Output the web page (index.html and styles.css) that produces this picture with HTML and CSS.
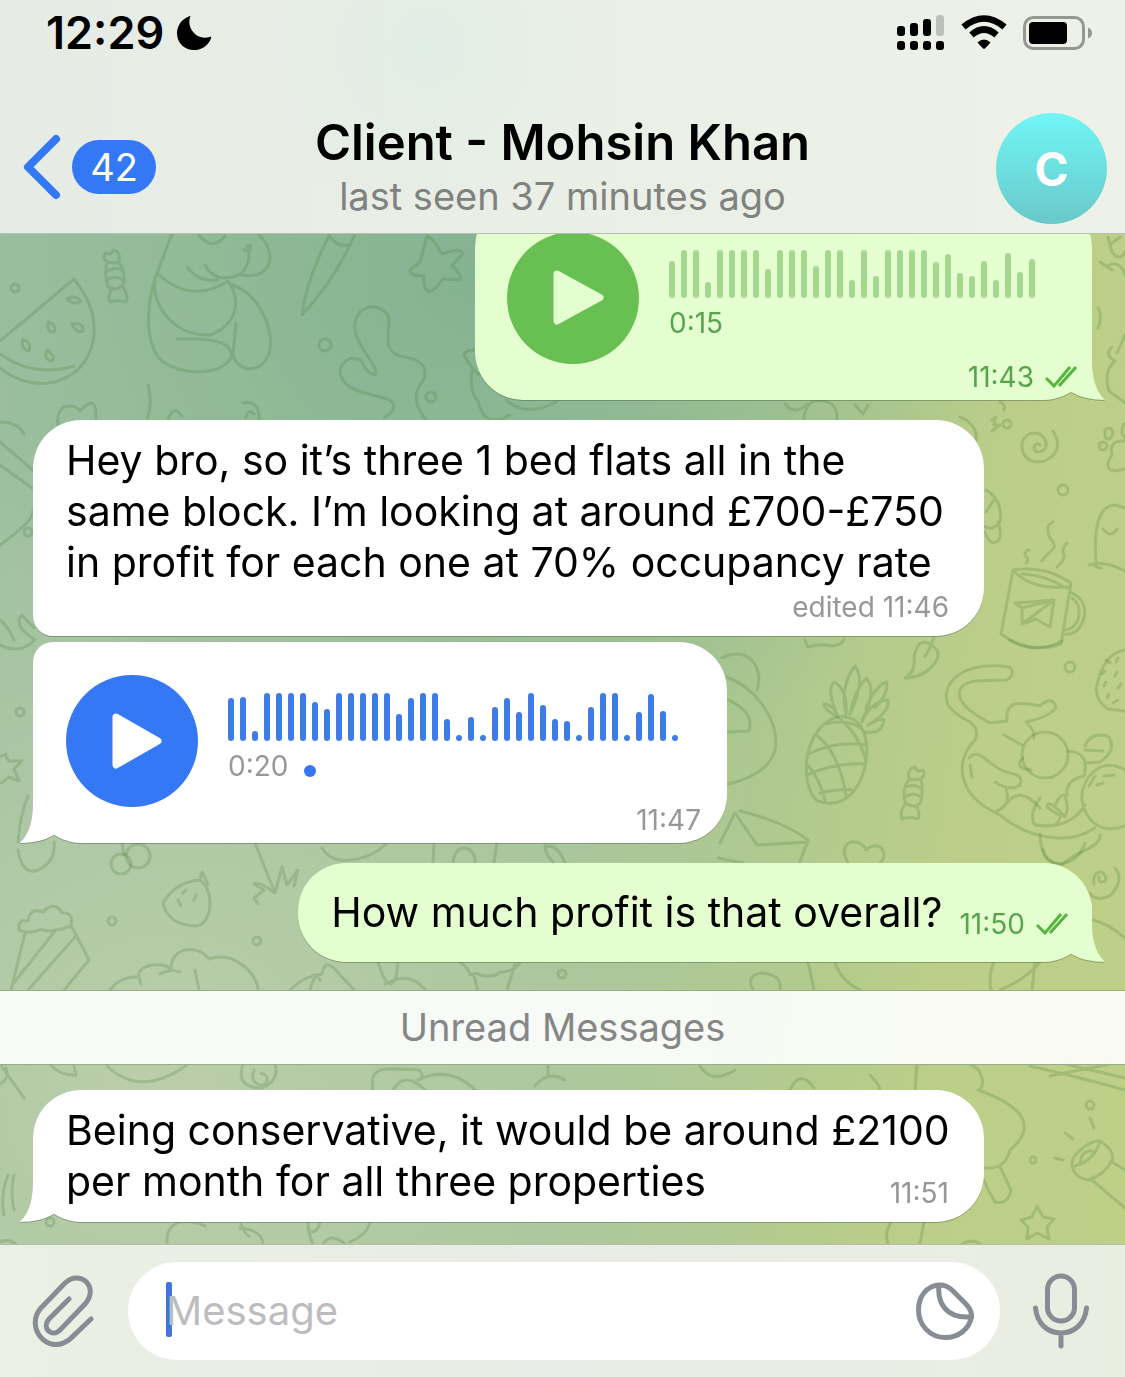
FILE: index.html
```html
<!DOCTYPE html>
<html lang="en">
<head>
<meta charset="utf-8">
<meta name="viewport" content="width=device-width, initial-scale=1">
<title>Client - Mohsin Khan</title>
<link rel="stylesheet" href="styles.css">
</head>
<body>
<header class="header">
  <div class="status">
    <div class="status-group">
      <span class="clock">12:29</span>
      <svg class="moon" viewBox="0 0 36 36" width="36" height="36" aria-hidden="true"><path d="M13.2 1.2C14.300 .8 14.600 1.200 14.100 2.300C10.500 12 20 26 33.500 22C35 21.600 35.600 22.100 35 23.400C32.200 30.500 25.800 35 18 35C8.300 35 1 27.800 1 18.200C1 10.400 6 3.800 13.200 1.200Z"/></svg>
    </div>
    <div class="status-group status-right">
      <svg viewBox="0 0 48 36" width="48" height="36" aria-hidden="true">
        <rect x="0" y="11" width="8" height="10" rx="3"/><rect x="13" y="8" width="8" height="13" rx="3"/><rect x="26" y="4" width="8" height="17" rx="3"/><rect x="39" y="0" width="8" height="21" rx="3" fill="#bcc0ba"/>
        <rect x="0" y="26" width="8" height="9" rx="3"/><rect x="13" y="26" width="8" height="9" rx="3"/><rect x="26" y="26" width="8" height="9" rx="3"/><rect x="39" y="26" width="8" height="9" rx="3"/>
      </svg>
      <svg viewBox="0 0 46 36" width="46" height="36" aria-hidden="true">
        <path d="M23 34Q24 34 29.500 27.600Q23 21.500 16.500 27.600Q22 34 23 34Z"/>
        <path d="M10.500 20Q23 9 35.500 20" fill="none" stroke="#000" stroke-width="6.500"/>
        <path d="M2.500 12Q23 -5 43.500 12" fill="none" stroke="#000" stroke-width="6.500"/>
      </svg>
      <svg viewBox="0 0 70 36" width="70" height="36" aria-hidden="true">
        <rect x="1.500" y="2.500" width="59" height="31" rx="9" fill="none" stroke="#949891" stroke-width="3"/>
        <rect x="6" y="7" width="38" height="22" rx="4"/>
        <path d="M65 12.500Q69 14 69 18T65 23.500Z" fill="#949891"/>
      </svg>
    </div>
  </div>
  <div class="nav">
    <button class="back" type="button" aria-label="Back, 42 unread chats">
      <svg viewBox="0 0 38 66" width="38" height="66" aria-hidden="true"><path d="M33 5L5 33L33 61" fill="none" stroke="#3478f6" stroke-width="8" stroke-linecap="round" stroke-linejoin="round"/></svg>
      <span class="count">42</span>
    </button>
    <div class="peer">
      <h1 class="peer-name">Client - Mohsin Khan</h1>
      <p class="peer-seen">last seen 37 minutes ago</p>
    </div>
    <button class="avatar" type="button" aria-label="Contact profile">C</button>
  </div>
</header>

<main class="chat">
  <svg class="doodles" viewBox="0 234 1125 1010" preserveAspectRatio="xMinYMin slice" aria-hidden="true">
    <!-- melon slice -->
    <path d="M0 341L74 279Q96 306 94 335C91 362 75 376 55 382Q25 388 0 368M0 354Q34 378 74 366"/>
    <path d="M67 299Q74 294 81 301Q75 306 67 299ZM48 322Q57 325 54 332Q46 332 48 322ZM72 324Q84 322 83 331Q76 334 72 324ZM23 339Q32 343 29 351Q20 349 23 339ZM47 350Q56 356 52 361Q43 360 47 350Z"/>
    <!-- candies -->
    <g id="candy"><path d="M107 262Q101 256 106 253Q111 256 113 250Q121 252 119 260Q121 264 107 262ZM107 262Q104 275 108 287Q116 292 123 285Q127 275 119 262M106 272Q114 266 122 270M107 280Q115 274 124 281M111 290Q107 300 111 302Q117 299 126 302Q129 296 123 287"/></g>
    <use href="#candy" transform="translate(1028 517) scale(-1 1)"/>
    <!-- sitting dog -->
    <path d="M172 234L157 273C145 305 146 340 158 357C175 376 220 377 231 358C235 340 205 338 177 339M157 273Q190 305 228 281C242 300 237 325 210 335C175 337 150 305 155 278M233 285C260 295 275 330 269 354C260 375 238 372 233 355L236 323M258 234C280 255 270 280 242 275M205 265Q215 285 241 274Q252 262 248 248M187 267Q198 282 218 280M199 235Q212 252 225 236M247 246q5-2 3 4q-6 2-6-1"/>
    <!-- carrot and star -->
    <path d="M330 234Q306 280 302 315Q335 280 355 234M329 236Q338 248 350 245"/>
    <path d="M427 236Q433 238 442 254Q461 247 463 254L452 265Q463 277 460 280L443 279Q433 293 428 291Q423 288 424 276Q409 276 410 270L420 262Z"/>
    <!-- squiggle -->
    <path d="M384 418Q400 407 390 400C370 393 340 392 340 370Q345 354 361 360C368 375 378 380 375 368C365 350 345 330 360 312Q375 300 388 315C392 330 380 350 400 356C430 360 428 375 420 385Q410 400 426 420"/>
    <path d="M58 424C55 400 78 405 80 411Q97 392 96 418M148 385q5 18-1 35M168 420q5-16 14-4M243 403Q260 400 259 420M246 418q2-10 8-4M0 422Q18 422 24 434"/>
    <path d="M481 351Q466 348 464 355Q472 370 480 375M472 371Q469 392 478 401Q484 430 510 415M506 400q20 18 50 2M804 420Q805 400 819 401Q838 400 837 420M785 404q10 12 22 0M855 405l8 9l5-9"/>
    <!-- left margin, middle -->
    <path d="M0 442L35 472M0 465L32 488M0 545Q35 520 33 510M0 645Q20 655 35 640Q12 625 22 615L34 628M0 620Q8 626 14 640M5 755l4 6l13 0l-8 8l5 12l-10-4l-8 6M0 757l6-3M28 796Q20 815 18 842M18 850Q22 876 38 870Q56 862 54 842"/>
    <!-- spiral, sprinkles, paw, ghost -->
    <path d="M1053 431C1065 450 1050 462 1037 462Q1021 460 1022 443Q1027 430 1040 434Q1050 442 1044 450Q1034 455 1034 447Q1036 442 1040 445"/>
    <path d="M992 420l4-3l-2 8l6 0l-8 6M1000 402q6 2 4 8M960 417Q978 425 976 440M986 490Q1003 500 1000 522Q992 532 984 526M986 512l8-12M998 522Q1004 540 994 543Q988 542 985 532"/>
    <path d="M1125 441Q1108 440 1112 455Q1102 470 1116 471L1125 469M1105 430Q1111 425 1113 433Q1110 443 1105 437ZM1124 424q-5 10 2 14M1101 568Q1091 566 1096 562Q1092 506 1115 505L1125 508M1089 565Q1105 560 1125 571M1103 529q8 10 14 0"/>
    <path d="M1108 237l4 15q8 10 13 0M1120 237l-10 8M1109 265q12-4 16 10M1100 262l12 8M1098 308q5 8 0 20M1112 347q-8 8 3 14q-12 10-6 30l16 12M1125 335l-8 18"/>
    <!-- steaming mug -->
    <path d="M1013 570Q1045 565 1071 583L1061 644Q1030 655 1001 634ZM1013 570Q1030 590 1069 587M1022 574Q1045 575 1062 586M1070 592Q1088 600 1084 618Q1079 636 1063 634M1072 598Q1082 605 1078 620Q1073 630 1065 630M1026 563q4-4 0-6q-3-6 3-7M1042 561C1048 550 1061 550 1050 538Q1044 526 1053 522M1057 567Q1067 558 1063 552Q1063 546 1067 543"/>
    <path d="M1015 603L1054 600L1050 627L1036 619L1022 624L1022 608ZM1022 608L1054 600L1022 624"/>
    <!-- leaf, sponge -->
    <path d="M905 678Q916 672 914 657Q918 637 930 644Q943 652 935 663Q925 677 905 678M934 638Q929 651 925 656M805 640l3 7q14-4 22-1q12 0 14-7M1009 640Q1035 655 1062 641M1125 650Q1104 653 1097 685Q1094 700 1108 709L1125 711"/>
    <path d="M1106 660l4 3M1118 658l-2 4M1105 671l-3 3M1117 672l-2 4M1106 682l-2 4M1121 684l-3 4M1109 694l-2 4M1118 700l-5 3" />
    <!-- bear -->
    <path d="M722 658C745 645 765 665 757 690M727 677C760 690 780 725 775 750Q768 775 728 784M728 700Q755 712 749 731L728 732"/>
    <!-- pineapple -->
    <path d="M838 717C870 712 875 760 855 790Q838 810 816 800C798 780 805 725 838 717ZM816 735Q838 750 846 795M838 717Q860 735 866 762M807 755Q835 740 866 745M807 775Q835 762 866 764M808 765Q820 780 825 800M824 724Q850 718 863 730M820 793Q838 788 855 790"/>
    <path d="M838 717Q826 690 834 682Q848 690 846 714M846 714Q840 685 855 666Q866 680 850 714M850 714Q855 690 866 678Q878 690 862 720M866 708Q876 685 887 682Q888 695 875 708M862 722Q872 700 888 700Q890 712 868 725M868 725Q880 718 884 720Q882 735 866 732M838 717Q824 710 824 704Q830 704 836 712"/>
    <!-- cat and pup -->
    <path d="M990 723Q955 705 960 690C965 678 985 681 1006 680Q1016 676 1010 667C960 660 940 685 948 705Q955 715 970 722Q980 730 975 740C955 760 955 795 1000 815C1030 840 1070 845 1095 828M990 723L1007 721C1005 700 1018 702 1040 706Q1052 695 1056 707Q1052 716 1026 722Q1035 730 1034 738M1004 735L1022 745M970 765l2 12M969 758C980 745 990 770 1010 773Q1024 775 1020 785Q1010 792 995 782M1006 790Q1012 805 995 812M1006 804Q1020 785 1040 808"/>
    <circle cx="1045" cy="755" r="23"/>
    <path d="M1068 751Q1090 752 1084 776Q1065 780 1067 795M1085 746Q1090 732 1108 736Q1118 750 1100 762L1085 763M1085 750l18 1M1023 758q-10 10 8 12M1125 770C1100 755 1080 780 1082 800C1085 820 1100 835 1125 826M1095 776l-6 10M1097 785l6-2M1104 776l10-1M1040 798Q1028 815 1035 825Q1070 830 1085 805M1040 825Q1060 830 1060 815M1055 805q10-20 12 0t-20 2q0-10 18 10M1040 834Q1040 862 1062 865C1075 850 1100 850 1100 835"/>
    <!-- envelope, heart -->
    <path d="M720 843L735 813L757 845L808 842M740 811Q785 822 808 840L800 862M718 858l25 5M848 863C835 840 860 836 866 850C880 838 890 855 880 863"/>
    <!-- lower left band -->
    <circle cx="121" cy="864" r="10"/><circle cx="138" cy="856" r="12"/>
    <path d="M124 855l-2-12M255 843L275 893M275 893Q258 880 254 884L264 890L254 898L258 904M275 893L282 867L287 885L298 870L294 886M322 848Q330 862 350 860Q372 858 387 843M434 843l-1 20M497 843l-3 20M453 862Q455 848 465 848Q475 850 475 862M545 845q0 10 8 17M545 847q12-4 20 16"/>
    <path d="M163 903Q175 882 200 880C215 890 213 925 195 926Q168 925 163 903ZM200 880l2-8l6 12M178 900l3 6M194 900l2-5M183 893l3-3"/>
    <path d="M19 930Q18 918 28 921Q30 907 43 912Q55 900 62 913Q74 912 71 926Q48 934 42 929Q28 935 19 930ZM25 933L11 990M55 931L13 984M76 936L28 990M72 927L89 960L64 990"/>
    <path d="M110 990Q120 976 139 977C135 965 165 960 171 970C170 945 200 945 209 959C235 950 258 975 258 990M139 977l2 7M160 974q10-6 20-2M195 970l4 20M290 990Q305 975 322 974Q325 955 340 975L354 990M310 990q5-20 10-10M378 962Q388 995 396 978L398 962M385 984Q410 970 425 990"/>
    <path d="M460 962Q470 970 470 975Q478 972 480 975Q495 978 500 972Q515 972 520 962M474 976l4 15M515 964l-8 26M753 990Q745 975 762 973Q783 975 780 990M808 962l6 28M835 962Q840 980 860 990M994 962q-6 14-3 28M1000 990q25-10 40-28M1035 962l-3 28M1093 920q16 4 32 18M1043 850q3 16 22 13q15-4 20-20M1115 868Q1125 880 1110 896Q1095 902 1090 893M1094 884q-2-12 8-12q8 8 0 10q-4 0-3-5"/>
    <!-- under the divider -->
    <path d="M0 1064L24 1098M0 1084q10-6 6-16M50 1064Q60 1076 76 1075L74 1066M107 1066Q140 1098 187 1065M243 1064Q235 1088 262 1088Q280 1080 275 1064M254 1070q-5 15 10 15q8-8-3-12M373 1090C368 1065 385 1068 420 1070Q425 1078 418 1080M393 1090Q405 1070 425 1090M418 1080Q450 1065 475 1090M548 1064v10M535 1086Q548 1070 565 1080M700 1066Q712 1085 735 1070M790 1090q10-22 24-2M870 1075Q880 1085 880 1090M917 1064l-2 26M970 1064C985 1070 985 1090 978 1090C1020 1105 1040 1125 1010 1150Q1005 1170 984 1168M1000 1167L1011 1190Q1008 1205 995 1202Q985 1185 984 1180M1030 1066Q1070 1075 1125 1090M1050 1076l60-12M1065 1064l60 14M1090 1118l4 10M1065 1133l8 6M1055 1158l8 2"/>
    <path d="M1072 1166C1070 1155 1090 1140 1100 1141Q1115 1150 1112 1160Q1105 1175 1088 1180Q1075 1178 1072 1166ZM1075 1166Q1095 1160 1100 1141M1080 1162q2-12 12-11M1092 1180L1125 1208M1112 1162L1125 1170"/>
    <path d="M1037 1206L1043 1217L1054 1219L1047 1227L1049 1239L1037 1233L1027 1239L1028 1227L1021 1220L1032 1217ZM888 1244q-4-10 3-22M920 1244l4-22M962 1244q10-6 18 0M167 1244C165 1215 195 1220 205 1226M241 1224q5 12 8 12M240 1228Q262 1230 263 1244M308 1222q0 12 5 22M320 1222q-2 10-8 10M323 1244Q330 1232 345 1244M370 1222q-2 12-20 20M0 1242q8-4 16 2M4 1215q-4-20 4-40M14 1210q-4-20 0-35"/>
    <!-- bubbles of soda -->
    <circle cx="15" cy="288" r="4"/><circle cx="325" cy="345" r="6"/><circle cx="431" cy="397" r="5"/><circle cx="1007" cy="424" r="4"/><circle cx="1063" cy="490" r="5"/><circle cx="1103" cy="446" r="4"/><circle cx="1070" cy="667" r="5"/><circle cx="20" cy="712" r="4"/><circle cx="112" cy="921" r="4"/><circle cx="257" cy="941" r="4"/><circle cx="562" cy="974" r="4"/><circle cx="1090" cy="1105" r="4"/><circle cx="1033" cy="1160" r="3"/><circle cx="50" cy="1222" r="4"/><circle cx="28" cy="532" r="4"/>
  </svg>

  <article class="bubble out voice-out tail-out">
    <div class="voice">
      <button class="play" type="button" aria-label="Play voice message">
        <svg viewBox="0 0 132 132" width="132" height="132" aria-hidden="true"><path d="M50 42L93 65.500L50 89Z"/></svg>
      </button>
      <div class="track">
        <div class="wave"><i style="height:37px"></i><i style="height:48px"></i><i style="height:48px"></i><i style="height:16px"></i><i style="height:48px"></i><i style="height:48px"></i><i style="height:48px"></i><i style="height:48px"></i><i style="height:29px"></i><i style="height:48px"></i><i style="height:48px"></i><i style="height:48px"></i><i style="height:32px"></i><i style="height:48px"></i><i style="height:48px"></i><i style="height:18px"></i><i style="height:48px"></i><i style="height:22px"></i><i style="height:48px"></i><i style="height:48px"></i><i style="height:48px"></i><i style="height:48px"></i><i style="height:36px"></i><i style="height:44px"></i><i style="height:25px"></i><i style="height:22px"></i><i style="height:37px"></i><i style="height:18px"></i><i style="height:45px"></i><i style="height:26px"></i><i style="height:39px"></i></div>
        <div class="duration">0:15</div>
      </div>
    </div>
    <div class="meta">11:43 <svg class="ticks" viewBox="0 0 32 22" width="32" height="22" aria-label="Read"><path d="M1 12L9 20L25 1M14 20L31 1"/></svg></div>
    <svg class="tail" viewBox="0 0 34 60" width="34" height="60" aria-hidden="true"><path d="M0 52L21 0V16C21 38 24 50 34 60Q14 60 0 52Z"/></svg>
  </article>

  <article class="bubble in">
    <p class="text">Hey bro, so it’s three 1 bed flats all in the same block. I’m looking at around £700-£750 in profit for each one at 70% occupancy rate</p>
    <div class="meta meta-row">edited 11:46</div>
  </article>

  <article class="bubble in grouped voice-in tail-in">
    <div class="voice">
      <button class="play" type="button" aria-label="Play voice message">
        <svg viewBox="0 0 132 132" width="132" height="132" aria-hidden="true"><path d="M50 42L92 66L50 90Z"/></svg>
      </button>
      <div class="track">
        <div class="wave"><i style="height:43px"></i><i style="height:44px"></i><i style="height:10px"></i><i style="height:48px"></i><i style="height:48px"></i><i style="height:48px"></i><i style="height:48px"></i><i style="height:39px"></i><i style="height:32px"></i><i style="height:48px"></i><i style="height:48px"></i><i style="height:48px"></i><i style="height:48px"></i><i style="height:48px"></i><i style="height:27px"></i><i style="height:43px"></i><i style="height:48px"></i><i style="height:48px"></i><i style="height:22px"></i><i style="height:6px"></i><i style="height:24px"></i><i style="height:6px"></i><i style="height:34px"></i><i style="height:43px"></i><i style="height:29px"></i><i style="height:48px"></i><i style="height:36px"></i><i style="height:22px"></i><i style="height:20px"></i><i style="height:6px"></i><i style="height:34px"></i><i style="height:48px"></i><i style="height:48px"></i><i style="height:6px"></i><i style="height:29px"></i><i style="height:47px"></i><i style="height:30px"></i><i style="height:6px"></i></div>
        <div class="duration">0:20<span class="unplayed"></span></div>
      </div>
    </div>
    <div class="meta">11:47</div>
    <svg class="tail" viewBox="0 0 34 60" width="34" height="60" aria-hidden="true"><path d="M34 52L13 0V16C13 38 10 50 0 60Q20 60 34 52Z"/></svg>
  </article>

  <article class="bubble out short tail-out">
    <p class="text">How much profit is that overall?</p>
    <div class="meta">11:50 <svg class="ticks" viewBox="0 0 32 22" width="32" height="22" aria-label="Read"><path d="M1 12L9 20L25 1M14 20L31 1"/></svg></div>
    <svg class="tail" viewBox="0 0 34 60" width="34" height="60" aria-hidden="true"><path d="M0 52L21 0V16C21 38 24 50 34 60Q14 60 0 52Z"/></svg>
  </article>

  <div class="divider">Unread Messages</div>

  <article class="bubble in tail-in">
    <p class="text">Being conservative, it would be around £2100 per month for all three properties <span class="meta meta-inline">11:51</span></p>
    <svg class="tail" viewBox="0 0 34 60" width="34" height="60" aria-hidden="true"><path d="M34 52L13 0V16C13 38 10 50 0 60Q20 60 34 52Z"/></svg>
  </article>
</main>

<footer class="composer">
  <button class="icon-button" type="button" aria-label="Attach">
    <svg viewBox="0 0 64 72" width="64" height="72" aria-hidden="true"><path d="M38 24L18 44C10 53 21 63 29 55L54 29C69 12 49 -6 34 8L10 33C-7 52 17 82 39 64L60 44"/></svg>
  </button>
  <div class="field">
    <span class="caret"></span>
    <input class="input" type="text" placeholder="Message" aria-label="Message">
    <button class="icon-button" type="button" aria-label="Stickers">
      <svg viewBox="0 0 58 58" width="58" height="58" aria-hidden="true"><path d="M23 3C10 4 2.500 15 2.500 28C2.500 43 14 55.500 29 55.500C43 55.500 53 47 55.500 35C56 30 53 25 49 21L36 8Q30 2.500 23 3ZM23 3C21 22 31 36 53 35"/></svg>
    </button>
  </div>
  <button class="icon-button" type="button" aria-label="Record voice message">
    <svg viewBox="0 0 56 76" width="56" height="76" aria-hidden="true"><rect x="14.500" y="3" width="27" height="45" rx="13.500"/><path d="M2.500 35C4 50 14 60 28 60S52 50 53.500 35M28 60V73"/></svg>
  </button>
</footer>
</body>
</html>
```
FILE: styles.css
```css
* { box-sizing: border-box; }

body {
  margin: 0;
  min-height: 100vh;
  display: flex;
  flex-direction: column;
  font-family: Inter, "Liberation Sans", sans-serif;
  color: #000;
  background: #ebefe6;
}

h1, p { margin: 0; }

button {
  border: 0;
  padding: 0;
  background: none;
  font: inherit;
  color: inherit;
}

svg { display: block; }

/* Header */
.header {
  position: relative;
  z-index: 2;
  padding-bottom: 9px;
  border-bottom: 1px solid #b4c0b0;
  background:
    radial-gradient(circle at 38% 20%, #e1eee5 0, rgba(225, 238, 229, 0) 24%),
    linear-gradient(90deg, #e6ebe5, #ebf0e7 60%, #edf1e8);
}

.status {
  display: flex;
  justify-content: space-between;
  height: 66px;
  padding: 0 32px 0 46px;
}

.status-group {
  display: flex;
  align-items: center;
  gap: 12px;
}

.status-right {
  align-items: flex-start;
  gap: 16px;
  padding-top: 15px;
}

.clock {
  font-size: 45px;
  font-weight: 600;
  line-height: 54px;
}

.nav {
  display: grid;
  grid-template-columns: 1fr auto 1fr;
  align-items: center;
  margin-top: 47px;
  padding: 0 18px;
}

.back {
  justify-self: start;
  display: flex;
  align-items: center;
  gap: 11px;
  padding: 0 0 3px 5px;
}

.count {
  min-width: 84px;
  padding: 0 15px;
  border-radius: 27px;
  background: #3478f6;
  color: #fff;
  font-size: 38px;
  line-height: 54px;
}

.peer {
  padding-bottom: 3px;
  text-align: center;
}

.peer-name {
  font-size: 49px;
  font-weight: 600;
  line-height: 58px;
}

.peer-seen {
  font-size: 38px;
  line-height: 48px;
  color: #7f827e;
}

.avatar {
  justify-self: end;
  width: 111px;
  height: 111px;
  border-radius: 50%;
  background: linear-gradient(#70f6f6, #6ac8c9);
  color: #fff;
  font-size: 46px;
  font-weight: 700;
}

/* Conversation */
.chat {
  position: relative;
  flex: 1;
  display: flex;
  flex-direction: column;
  align-items: flex-start;
  overflow: hidden;
  padding-bottom: 22px;
  background:
    radial-gradient(circle at 42% 4%, #84b392 0, rgba(132, 179, 146, 0) 46%),
    radial-gradient(circle at 14% 85%, #bbceab 0, rgba(187, 206, 171, 0) 52%),
    linear-gradient(98deg, #9cbf9f 0, #a3c395 52%, #bccf88 84%, #bed086);
}

.doodles {
  position: absolute;
  inset: 0;
  width: 100%;
  height: 100%;
  fill: none;
  stroke: rgba(74, 124, 58, 0.24);
  stroke-width: 3;
  stroke-linecap: round;
  stroke-linejoin: round;
}

.bubble {
  position: relative;
  display: grid;
  margin: 20px 33px 0;
  border-radius: 48px;
  max-width: 951px;
  filter: drop-shadow(0 1px 0 rgba(60, 90, 50, 0.4));
}

.in {
  background: #fff;
  border-bottom-left-radius: 20px;
  padding: 15px 24px 13px 33px;
}

.out {
  align-self: flex-end;
  background: #e5fed0;
}

.grouped {
  margin-top: 6px;
  border-top-left-radius: 20px;
}

.tail-in { border-bottom-left-radius: 48px; }

.tail {
  position: absolute;
  bottom: 0;
}

.tail-in .tail { left: -13px; fill: #fff; }
.tail-out .tail { right: -13px; fill: #e5fed0; }

.text {
  font-size: 41px;
  line-height: 51px;
}

.meta {
  display: flex;
  align-items: center;
  gap: 11px;
  align-self: end;
  justify-self: end;
  font-size: 28px;
  line-height: 32px;
  color: #97979b;
}

.out .meta,
.out .duration { color: #58a34d; }

.meta-row { margin: 3px 11px 0 0; }

/* Time that shares the last line of a message */
.meta-inline {
  float: right;
  margin: 21px 11px 0 0;
}

.voice-in > .voice,
.voice-in > .meta,
.voice-out > .voice,
.voice-out > .meta { grid-area: 1 / 1; }

.short {
  grid-template-columns: auto auto;
  column-gap: 17px;
  padding: 24px 24px 22px 33px;
}

.short > .text { padding-bottom: 2px; }

.ticks {
  fill: none;
  stroke: #56b53f;
  stroke-width: 3;
}

/* Voice messages */
.voice {
  display: flex;
  gap: 30px;
  padding-bottom: 29px;
}

.voice-in { padding: 33px 26px 7px 33px; }
.voice-in .voice { padding-right: 17px; }

.voice-out {
  margin-top: -35px;
  padding: 33px 15px 7px 32px;
}
.voice-out .voice { padding-right: 36px; }

.play {
  width: 132px;
  height: 132px;
  border-radius: 50%;
  background: #3478f6;
  fill: #fff;
  stroke: #fff;
  stroke-width: 7;
  stroke-linejoin: round;
}

.out .play {
  background: #67c051;
  fill: #e5fed0;
  stroke: #e5fed0;
}

.track { padding-top: 18px; }

.wave {
  display: flex;
  align-items: flex-end;
  gap: 6px;
  height: 48px;
  padding-right: 6px;
}

.wave i {
  width: 6px;
  border-radius: 3px;
  background: #3e7be6;
}

.out .wave i { background: #a5d791; }

.duration {
  display: flex;
  align-items: center;
  gap: 16px;
  margin-top: 9px;
  font-size: 28px;
  line-height: 32px;
  color: #97979b;
}

.unplayed {
  width: 12px;
  height: 12px;
  margin-top: 10px;
  border-radius: 50%;
  background: #3478f6;
}

.divider {
  position: relative;
  align-self: stretch;
  margin: 28px 0 5px;
  border: solid #98ad8b;
  border-width: 1px 0;
  background: rgba(255, 255, 255, 0.9);
  text-align: center;
  font-size: 38px;
  line-height: 73px;
  color: #858786;
}

/* Message entry */
.composer {
  display: flex;
  align-items: center;
  gap: 33px;
  padding: 17px 36px 17px 31px;
  border-top: 1px solid #b5c0ab;
  background: linear-gradient(90deg, #ebf0e4, #e9ece6 50%, #eaeee1);
}

.icon-button svg {
  fill: none;
  stroke: #888c95;
  stroke-width: 5;
  stroke-linecap: round;
}

.field {
  position: relative;
  flex: 1;
  min-width: 0;
  display: flex;
  align-items: center;
  height: 98px;
  padding: 0 26px 0 38px;
  border-radius: 49px;
  background: #fff;
}

.input {
  position: relative;
  flex: 1;
  min-width: 0;
  border: 0;
  padding: 0;
  outline: 0;
  background: none;
  font: inherit;
  font-size: 40px;
  line-height: 50px;
}

.input::placeholder { color: #bdbdbf; opacity: 1; }

.caret {
  position: absolute;
  left: 38px;
  top: 20px;
  width: 6px;
  height: 55px;
  border-radius: 2px;
  background: #3f76db;
}
```
